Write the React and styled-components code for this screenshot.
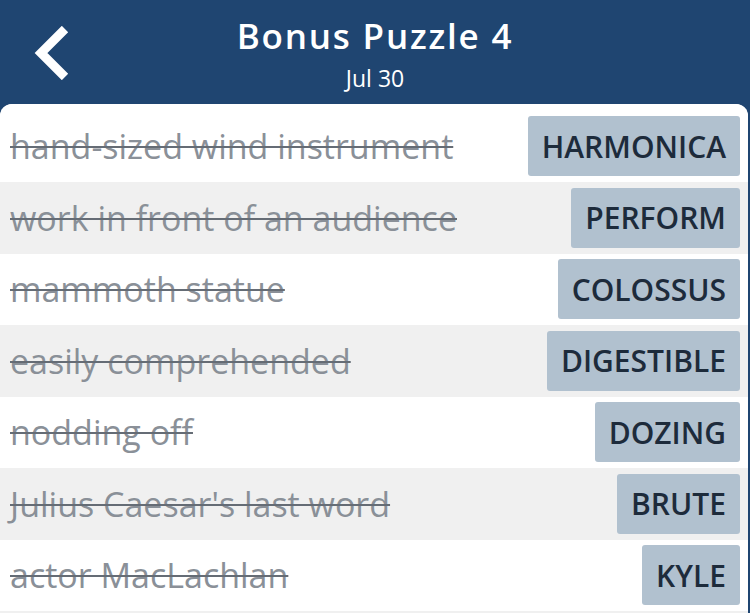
import React from 'react'
import styled, { createGlobalStyle } from 'styled-components'

const clues = [
  { clue: 'hand-sized wind instrument', answer: 'HARMONICA' },
  { clue: 'work in front of an audience', answer: 'PERFORM' },
  { clue: 'mammoth statue', answer: 'COLOSSUS' },
  { clue: 'easily comprehended', answer: 'DIGESTIBLE' },
  { clue: 'nodding off', answer: 'DOZING' },
  { clue: "Julius Caesar's last word", answer: 'BRUTE' },
  { clue: 'actor MacLachlan', answer: 'KYLE' },
]

const Global = createGlobalStyle`
  body {
    margin: 0;
    background: #1f4571;
    font-family: "Open Sans", Lato, sans-serif;
  }
`

function App() {
  return (
    <Page>
      <Global />
      <Header>
        <Back aria-label="back">
          <svg width="38" height="54" viewBox="0 0 38 54">
            <path d="M32 3 L8 27 L32 51" fill="none" stroke="#fff" strokeWidth="9" strokeLinecap="butt" strokeLinejoin="miter" />
          </svg>
        </Back>
        <Title>Bonus Puzzle 4</Title>
        <Sub>Jul 30</Sub>
      </Header>
      <Card>
        {clues.map((c, i) => (
          <Row key={c.answer} shaded={i % 2 === 1}>
            <Clue>{c.clue}</Clue>
            <Answer>{c.answer}</Answer>
          </Row>
        ))}
      </Card>
    </Page>
  )
}

export default App

const Page = styled.div`
  width: 750px;
  height: 613px;
  overflow: hidden;
  display: flex;
  flex-direction: column;
  background: #1f4571;
`

const Header = styled.div`
  position: relative;
  height: 104px;
  flex-shrink: 0;
  display: flex;
  flex-direction: column;
  align-items: center;
  color: #fff;
`

const Back = styled.div`
  position: absolute;
  left: 33px;
  top: 26px;
  width: 38px;
  height: 54px;
`

const Title = styled.div`
  margin-top: 13px;
  font-size: 35px;
  font-weight: 600;
  letter-spacing: 1.8px;
  line-height: 46px;
`

const Sub = styled.div`
  margin-top: 5px;
  font-size: 23px;
  line-height: 28px;
`

const Card = styled.div`
  flex: 1;
  margin-right: 2px;
  background: #f0f0f0;
  border-radius: 12px 12px 0 0;
  overflow: hidden;
  display: flex;
  flex-direction: column;
`

const Row = styled.div`
  height: 71.5px;
  flex-shrink: 0;
  display: flex;
  align-items: center;
  justify-content: space-between;
  padding: 0 8px 0 10px;
  box-sizing: border-box;
  background: ${p => (p.shaded ? '#f0f0f0' : '#ffffff')};
  &:first-child {
    height: 78px;
    padding-top: 6px;
  }
`

const Clue = styled.span`
  font-size: 34px;
  color: #8a9098;
  text-decoration: line-through;
  text-decoration-color: #656c75;
  text-decoration-thickness: 1.5px;
  white-space: nowrap;
`

const Answer = styled.div`
  height: 60px;
  display: flex;
  align-items: center;
  padding: 0 14px;
  background: #b1c1cf;
  border-radius: 3px;
  color: #1d2b3b;
  font-size: 30px;
  font-weight: 600;
`
